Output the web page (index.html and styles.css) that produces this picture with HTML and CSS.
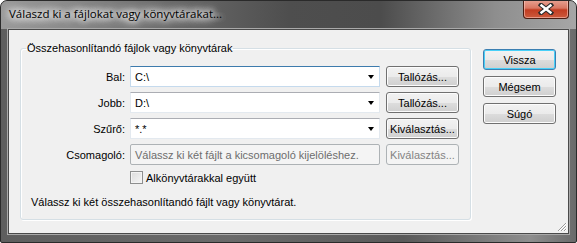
FILE: index.html
```html
<!doctype html>
<html lang="hu">
<head>
    <meta charset="utf-8">
    <title>Válaszd ki a fájlokat vagy könyvtárakat...</title>
    <link rel="stylesheet" href="styles.css">
</head>
<body>
<div class="window">
    <div class="titlebar">
        <div class="title">Válaszd ki a fájlokat vagy könyvtárakat...</div>
        <div class="close-btn">
            <svg width="16" height="12" viewBox="0 0 16 12">
                <path d="M3 2 L13 10 M13 2 L3 10" stroke="#2b2b2b" stroke-width="4.5" stroke-linecap="square"/>
                <path d="M3.5 2.5 L12.5 9.5 M12.5 2.5 L3.5 9.5" stroke="#ffffff" stroke-width="2.4" stroke-linecap="square"/>
            </svg>
        </div>
    </div>
    <div class="frame">
        <div class="client">
            <fieldset class="group">
                <legend>Összehasonlítandó fájlok vagy könyvtárak</legend>
                <div class="form-grid">
                    <label class="lbl">Bal:</label>
                    <div class="combo focused"><span>C:\</span><i class="arrow"></i></div>
                    <div class="btn">Tallózás...</div>

                    <label class="lbl">Jobb:</label>
                    <div class="combo"><span>D:\</span><i class="arrow"></i></div>
                    <div class="btn">Tallózás...</div>

                    <label class="lbl">Szűrő:</label>
                    <div class="combo"><span>*.*</span><i class="arrow"></i></div>
                    <div class="btn">Kiválasztás...</div>

                    <label class="lbl">Csomagoló:</label>
                    <div class="textbox disabled">Válassz ki két fájlt a kicsomagoló kijelöléshez.</div>
                    <div class="btn disabled">Kiválasztás...</div>

                    <span></span>
                    <label class="check"><span class="box"></span>Alkönyvtárakkal együtt</label>
                    <span></span>
                </div>
                <div class="status">Válassz ki két összehasonlítandó fájlt vagy könyvtárat.</div>
            </fieldset>
            <div class="side-buttons">
                <div class="btn default">Vissza</div>
                <div class="btn">Mégsem</div>
                <div class="btn">Súgó</div>
            </div>
            <div class="grip">
                <svg width="10" height="10" viewBox="0 0 10 10">
                    <path d="M9 1 L1 9 M9 4 L4 9 M9 7 L7 9" stroke="#9a9a9a" stroke-width="1"/>
                    <path d="M10 1 L2 9 M10 4 L5 9 M10 7 L8 9" stroke="#ffffff" stroke-width="1"/>
                </svg>
            </div>
        </div>
    </div>
</div>
</body>
</html>
```

FILE: styles.css
```css
html, body {
	margin: 0;
	padding: 0;
	background: #ffffff;
}
.window {
	width: 577px;
	height: 243px;
	box-sizing: border-box;
	border: 1px solid #2a2a2a;
	border-radius: 7px 7px 2px 2px;
	background: linear-gradient(to right, #5e5e5e 0%, #6a6a6a 40%, #5a5a5a 70%, #8e8e8e 92%, #6a6a6a 100%);
	display: flex;
	flex-direction: column;
	overflow: hidden;
}
.titlebar {
	height: 28px;
	display: flex;
	justify-content: space-between;
	align-items: flex-start;
	background: linear-gradient(to right, #9a9a9a 0%, #8a8a8a 12%, #6a6a6a 30%, #4e4e4e 50%, #4c4c4c 66%, #8e8e8e 86%, #a6a6a6 100%);
}
.title {
	font-family: "Open Sans", "Noto Sans", sans-serif;
	font-size: 11.5px;
	color: #000000;
	padding: 5px 0 0 8px;
	text-shadow: 0 0 6px #ffffff, 0 0 8px #ffffff, 0 0 10px #ffffff, 0 0 12px #ffffff;
}
.close-btn {
	width: 44px;
	height: 18px;
	margin: -1px 7px 0 0;
	border: 1px solid #4a1d12;
	border-top: none;
	border-radius: 0 0 4px 4px;
	background: linear-gradient(to bottom, #e8a394 0%, #d97762 45%, #c23c21 55%, #cc5a3c 100%);
	box-shadow: inset 0 0 0 1px rgba(255, 210, 200, 0.55);
	display: flex;
	justify-content: center;
	align-items: center;
}
.frame {
	flex: 1;
	padding: 0 7px 8px 7px;
	display: flex;
}
.client {
	flex: 1;
	position: relative;
	background: #f0f0f0;
	border: 1px solid #4a4a4a;
	box-shadow: 0 0 0 1px #a9a9a9;
	display: flex;
	align-items: flex-start;
	font-family: "Liberation Sans", Arial, sans-serif;
	font-size: 11px;
	color: #000000;
}
.group {
	margin: 11px 0 0 11px;
	width: 451px;
	height: 179px;
	box-sizing: border-box;
	padding: 0;
	border: 1px solid #d5dfe5;
	border-radius: 3px;
	box-shadow: inset 1px 1px 0 #ffffff, 1px 1px 0 #ffffff;
}
.group legend {
	margin-left: 5px;
	padding: 0 1px;
	line-height: 14px;
}
.form-grid {
	margin-top: 11px;
	display: grid;
	grid-template-columns: 104px 250px 74px;
	grid-template-rows: repeat(4, 21px) 15px;
	column-gap: 5px;
	row-gap: 5px;
	align-items: center;
}
.form-grid .btn {
	margin-left: 1px;
}
.lbl {
	text-align: right;
}
.combo, .textbox {
	height: 21px;
	box-sizing: border-box;
	background: #ffffff;
	border: 1px solid #e3e9ef;
	border-top-color: #abadb3;
	display: flex;
	align-items: center;
	justify-content: space-between;
	padding: 0 5px 0 4px;
}
.combo.focused {
	border-color: #c5daed;
	border-top-color: #3d7bad;
}
.arrow {
	width: 0;
	height: 0;
	border-left: 3.5px solid transparent;
	border-right: 3.5px solid transparent;
	border-top: 4px solid #000000;
}
.textbox.disabled {
	background: #f4f4f4;
	border-color: #adb2b5;
	color: #6d6d6d;
	border-radius: 2px;
}
.btn {
	height: 21px;
	box-sizing: border-box;
	border: 1px solid #707070;
	border-radius: 3px;
	background: linear-gradient(to bottom, #f2f2f2 0%, #ebebeb 50%, #dddddd 51%, #cfcfcf 100%);
	box-shadow: inset 0 0 0 1px #fcfcfc;
	display: flex;
	align-items: center;
	justify-content: center;
	white-space: nowrap;
}
.btn.disabled {
	border-color: #adb2b5;
	background: #f4f4f4;
	box-shadow: none;
	color: #838383;
}
.btn.default {
	border-color: #3c7fb1;
	box-shadow: inset 0 0 0 1px #48d0f8;
}
.check {
	display: flex;
	align-items: center;
	gap: 3px;
}
.box {
	width: 13px;
	height: 13px;
	box-sizing: border-box;
	border: 1px solid #8e8f8f;
	background: linear-gradient(135deg, #dcdcdc 0%, #f6f6f6 100%);
	box-shadow: inset 0 0 0 1px #f4f4f4;
}
.status {
	margin: 11px 0 0 10px;
}
.side-buttons {
	margin: 19px 0 0 12px;
	width: 73px;
	display: flex;
	flex-direction: column;
	gap: 6px;
}
.grip {
	position: absolute;
	right: 1px;
	bottom: 1px;
	line-height: 0;
}
```
